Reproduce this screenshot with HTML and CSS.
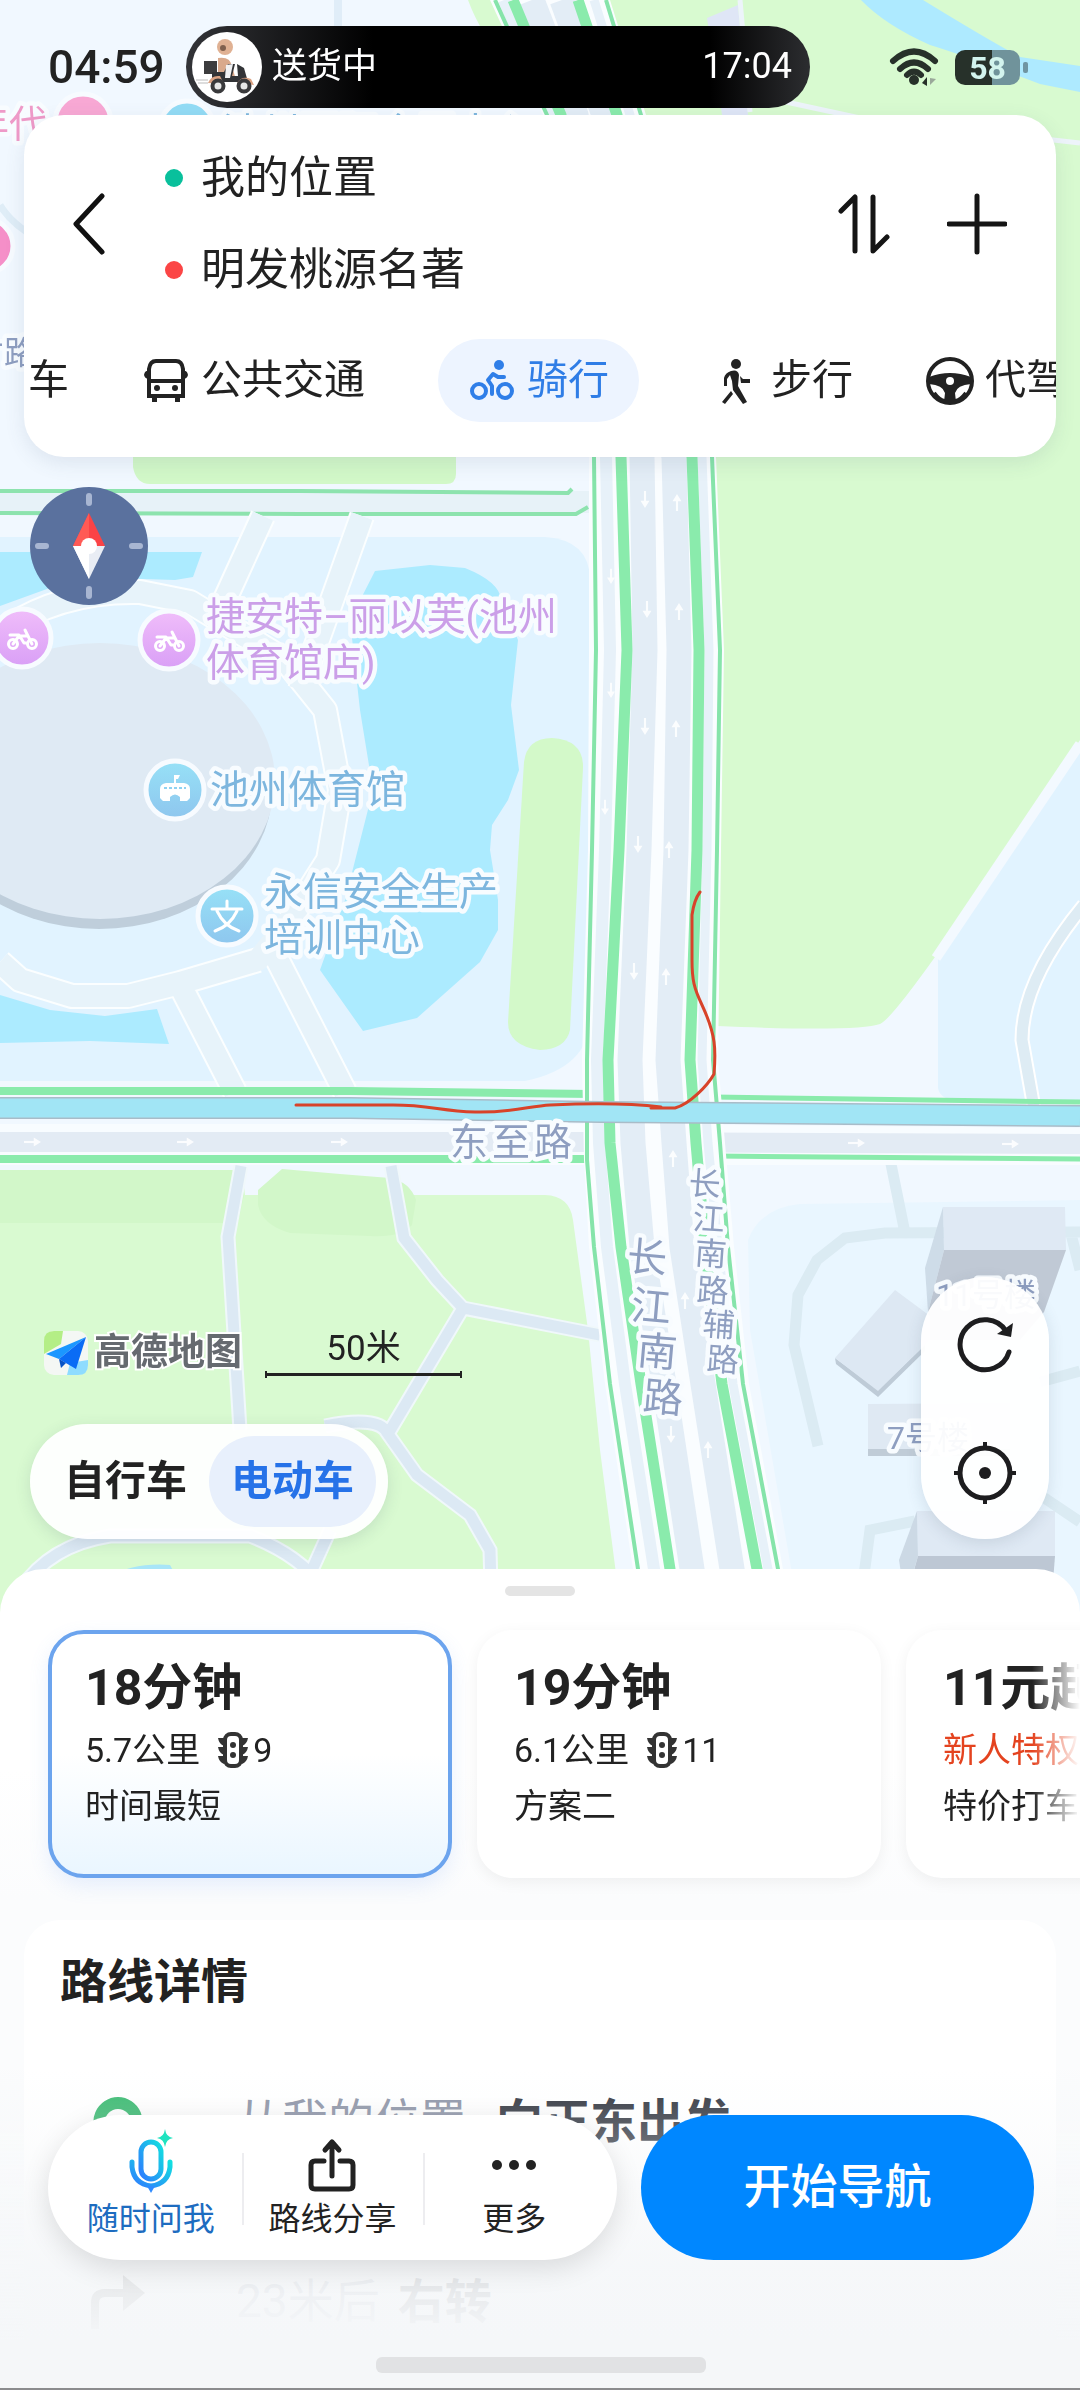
FILE: index.html
```html
<!DOCTYPE html>
<html lang="zh-CN">
<head>
<meta charset="utf-8">
<meta name="viewport" content="width=device-width, initial-scale=1">
<title>骑行路线</title>
<link rel="stylesheet" href="styles.css">
</head>
<body>
<main class="app">
  <section class="stage">
    <svg class="map" viewBox="0 0 1080 1620" preserveAspectRatio="xMidYMin slice" role="img" aria-label="地图">
      <defs>
        <symbol id="lane-arrow" viewBox="0 0 12 20"><path d="M6 0 L11 8 H7.2 V19 H4.8 V8 H1 Z" fill="#fff"/></symbol>
        <linearGradient id="poi-purple" x1="0" y1="0" x2="0" y2="1"><stop offset="0" stop-color="#f0bdfa"/><stop offset="1" stop-color="#d99ff6"/></linearGradient>
        <linearGradient id="poi-blue" x1="0" y1="0" x2="0" y2="1"><stop offset="0" stop-color="#97e1f7"/><stop offset="1" stop-color="#8ec6ee"/></linearGradient>
        <g id="moto" fill="none" stroke="#fff" stroke-width="3" stroke-linecap="round" stroke-linejoin="round"><circle cx="-9" cy="5" r="4.500"/><circle cx="10" cy="5" r="4.500"/><path d="M-9 5 L-3 -3 H6 L10 5 M-12 -4 H-3 L2 4 H4 M3 -9 L6 -3"/></g>
      </defs>

      <!-- ground -->
      <rect width="1080" height="1620" fill="#f1f8ff"/>
      <path d="M338 0V30" stroke="#e0edf8" stroke-width="8"/>
      <path d="M0 205 Q12 225 40 240" stroke="#dfedf7" stroke-width="7" fill="none"/>
      <path d="M468 0 H1080 V740 L935 957 Q890 1020 880 1024 Q858 1032 717 1026 L714 457 L560 115 Q490 60 468 0Z" fill="#d8fad0"/>
      <path d="M707 18 L738 5 L748 115 H722Z" fill="#dfe6f6"/>
      <path d="M740 0 L750 112 M786 102 L860 118 L1080 143" stroke="#edf4fa" stroke-width="5" fill="none"/>
      <path d="M861 0 H923 Q985 38 1020 57 L1080 66 V92 L1040 84 Q960 54 930 45 Q885 25 861 0Z" fill="#aeeaff"/>
      <path d="M133 457H456V474Q456 484 446 484H150Q136 484 133 467Z" fill="#d2f8c8"/>

      <!-- stadium block -->
      <path d="M0 537H545Q590 540 590 580V1020Q588 1068 525 1081H0Z" fill="#e1f3ff"/>
      <path d="M0 502H572Q592 502 592 502" stroke="#e7f2f8" stroke-width="22" fill="none"/>
      <path d="M0 491H300L568 493L572 489M0 513L300 514H576L588 507" stroke="#8de3ae" stroke-width="4" fill="none"/>
      <g fill="#acebff">
        <path d="M0 552H202L193 577L175 580L80 577L0 606Z"/>
        <path d="M375 571L430 565L465 568Q500 582 501 600L518 640L511 705L519 770L508 800L492 825L490 850L498 900V930L480 962L417 1018L363 1031L320 970L345 900L373 790L360 710L350 620Z"/>
        <path d="M0 995L50 1010L105 1016L157 1009L169 1044L90 1041L0 1043Z"/>
      </g>
      <g fill="none" stroke-linejoin="round">
        <path d="M0 632Q60 590 140 592L190 602L285 660L325 710L340 790L328 860L290 920M258 960L180 983L128 996H72L20 980L0 962M263 516L222 606M362 516L300 690M180 985L235 1092M275 955L345 1092" stroke="#fbfeff" stroke-width="26"/>
        <path d="M0 632Q60 590 140 592L190 602L285 660L325 710L340 790L328 860L290 920L258 960L180 983L128 996H72L20 980L0 962M263 516L222 606M362 516L300 690M180 985L235 1092M275 955L345 1092" stroke="#e7f3fa" stroke-width="22"/>
      </g>
      <ellipse cx="99" cy="791" rx="173" ry="138" fill="#bfcedb"/>
      <ellipse cx="100" cy="781" rx="175" ry="138" fill="#dfeaf4"/>
      <path d="M524 762Q527 738 552 738Q584 740 583 768L570 1030Q566 1049 540 1050Q508 1046 508 1022Z" fill="#d3f9c9"/>

      <!-- east side -->
      <path d="M1080 752L938 958V1088Q940 1099 955 1100H1080Z" fill="#e1f3ff"/>
      <path d="M1080 744L936 958" stroke="#f3f9ff" stroke-width="10"/>
      <g fill="none"><path d="M1084 905Q1022 980 1022 1040L1034 1108" stroke="#fff" stroke-width="15"/><path d="M1084 905Q1022 980 1022 1040L1034 1108" stroke="#deecf4" stroke-width="11"/></g>

      <!-- southern park -->
      <path d="M0 1170H232Q244 1175 245 1195H545Q570 1196 573 1220L588 1330L600 1450L622 1620H0Z" fill="#d9fad1"/>
      <path d="M0 1170H232Q240 1172 244 1195L238 1223H0Z M258 1190L282 1169L340 1174L390 1178Q410 1182 416 1200L412 1225Q400 1238 370 1236L290 1233Q262 1225 258 1205Z" fill="#d2f7c9"/>
      <path d="M70 1620Q100 1560 170 1565L200 1620Z" fill="#a8e5f8"/>
      <path d="M241 1166L228 1237L240 1430M391 1166L404 1238L437 1280L463 1308L600 1335M463 1308L388 1434L417 1475L470 1515L490 1550L492 1620M325 1426Q380 1415 388 1434M20 1590Q50 1545 110 1536H250Q300 1555 325 1590M330 1530L312 1570" fill="none" stroke="#f0f8fb" stroke-width="15"/>
      <path d="M241 1166L228 1237L240 1430M391 1166L404 1238L437 1280L463 1308L600 1335M463 1308L388 1434L417 1475L470 1515L490 1550L492 1620M325 1426Q380 1415 388 1434M20 1590Q50 1545 110 1536H250Q300 1555 325 1590M330 1530L312 1570" fill="none" stroke="#dce9f4" stroke-width="11"/>

      <!-- residential block -->
      <path d="M748 1240Q760 1208 800 1204L1080 1200V1620H800L750 1330Z" fill="#e9f6ff"/>
      <path d="M891 1164L905 1233M1080 1232L885 1233L845 1238L817 1260L798 1295L794 1345L818 1446M1070 1230L1080 1270M1040 1382L1080 1371M1040 1495L1080 1522M858 1620L870 1530L915 1521" fill="none" stroke="#dbebf3" stroke-width="11"/>
      <path d="M943 1207H1065L1066 1250H944Z" fill="#dfe9f4"/>
      <path d="M943 1207L944 1250L928 1312L925 1268Z" fill="#cedce8"/>
      <path d="M944 1250H1066L1044 1312L1020 1340H930L928 1312Z" fill="#c0c9d5"/>
      <path d="M835 1358L878 1390V1397L836 1364ZM878 1390L925 1345V1351L878 1397Z" fill="#becbd7"/>
      <path d="M895 1290L930 1316V1340L878 1391L835 1358Z" fill="#dde8f3"/>
      <path d="M868 1404L1010 1403V1456H868Z" fill="#dfe9f3"/><path d="M868 1449H1010V1456H868Z" fill="#c0ccd7"/>
      <path d="M917 1511H1055V1556H918Z" fill="#dfe9f4"/><path d="M917 1511L918 1556L905 1600L899 1560Z" fill="#ccd9e5"/><path d="M918 1556H1055L1050 1620H900Z" fill="#bdc7d4"/>

      <!-- 东至路 -->
      <path d="M0 1124H600L1080 1128V1165H0Z" fill="#f8fcff"/>
      <path d="M0 1142H600L1080 1144" stroke="#e3ebf4" stroke-width="20" fill="none"/>
      <path d="M0 1091H350L592 1094M0 1159H592" stroke="#8aebac" stroke-width="8" fill="none"/>
      <path d="M714 1097L1080 1102M716 1156L1080 1159" stroke="#8aebac" stroke-width="5" fill="none"/>

      <!-- 长江南路 -->
      <path d="M490 0L543 115L589 457V650L588 850L582 1060L584 1160L589 1247L605 1384L633 1569L642 1620H790L783 1569L749 1384L734 1247L725 1143L718 1060L721 850L724 650L716 457L646 115L610 0Z" fill="#fafdff"/>
      <g fill="none">
        <path d="M504 0L553 115L606 457L610 650L605 850L597 1060L599 1143L607 1247L625 1384L654 1569L662 1620" stroke="#e7f1f9" stroke-width="12"/>
        <path d="M594 0L630 115L702 457L709 650L707 850L702 1060L708 1143L718 1247L733 1384L768 1569L776 1620" stroke="#e7f1f9" stroke-width="9"/>
        <path d="M532 0L576 115L642 457L645 650L639 850L630 1060L633 1143L642 1247L664 1384L692 1569L700 1620" stroke="#e3edf6" stroke-width="25"/>
        <path d="M562 0L604 115L674 457L679 650L676 850L668 1060L674 1143L682 1247L703 1384L732 1569L741 1620" stroke="#e3edf6" stroke-width="25"/>
        <path d="M513 0L561 115L621 457L627 650L619 850L608 1060L610 1143L621 1247L641 1384L670 1569L678 1620M578 0L617 115L692 457L699 650L697 850L690 1060L696 1143L705 1247L722 1384L757 1569L766 1620" stroke="#8aebac" stroke-width="11"/>
        <path d="M495 0L547 115L594 457L596 650L592 850L587 1060V1160L594 1247L610 1384L638 1569L646 1620M606 0L641 115L712 457L720 650L717 850L713 1060L720 1143L728 1247L743 1384L778 1569L786 1620" stroke="#86e4aa" stroke-width="4"/>
      </g>
      <g opacity=".85">
        <use href="#lane-arrow" x="671" y="494" width="12" height="18"/><use href="#lane-arrow" x="673" y="603" width="12" height="18"/><use href="#lane-arrow" x="670" y="720" width="12" height="18"/><use href="#lane-arrow" x="663" y="841" width="12" height="18"/><use href="#lane-arrow" x="660" y="968" width="12" height="18"/><use href="#lane-arrow" x="667" y="1150" width="12" height="18"/><use href="#lane-arrow" x="679" y="1292" width="12" height="18"/><use href="#lane-arrow" x="702" y="1441" width="12" height="18"/>
        <g transform="scale(1 -1)"><use href="#lane-arrow" x="639" y="-508" width="12" height="18"/><use href="#lane-arrow" x="641" y="-618" width="12" height="18"/><use href="#lane-arrow" x="639" y="-735" width="12" height="18"/><use href="#lane-arrow" x="632" y="-853" width="12" height="18"/><use href="#lane-arrow" x="628" y="-980" width="12" height="18"/><use href="#lane-arrow" x="665" y="-1443" width="12" height="18"/><use href="#lane-arrow" x="606" y="-584" width="10" height="16"/><use href="#lane-arrow" x="606" y="-698" width="10" height="16"/><use href="#lane-arrow" x="600" y="-815" width="10" height="16"/></g>
        <g transform="rotate(90)"><use href="#lane-arrow" x="1136" y="-41" width="12" height="18"/><use href="#lane-arrow" x="1136" y="-194" width="12" height="18"/><use href="#lane-arrow" x="1136" y="-348" width="12" height="18"/><use href="#lane-arrow" x="1137" y="-865" width="12" height="18"/><use href="#lane-arrow" x="1138" y="-1019" width="12" height="18"/></g>
      </g>

      <!-- selected route and its sketch line -->
      <path d="M0 1108H350L600 1112L1080 1116" stroke="#a9bcc8" stroke-width="22" fill="none"/>
      <path d="M0 1108H350L600 1112L1080 1116" stroke="#a1e5f5" stroke-width="19" fill="none"/>
      <path d="M296 1105H393C430 1105 440 1111 475 1112S530 1106 550 1105S620 1102 661 1107L651 1108H675C690 1104 708 1085 714 1074C716 1050 716 1035 702 1005C694 988 692 980 692 960V915Q694 900 700 892" fill="none" stroke="#d8432a" stroke-width="3" stroke-linecap="round" stroke-linejoin="round"/>

      <!-- road names -->
      <g class="label road">
        <text class="t38" x="450 492 534" y="1155">东至路</text>
        <text class="t40" x="626 630 636 642" y="1270 1319 1364 1410" rotate="5">长江南路</text>
        <text class="t32" x="688 692 694 696 702 706" y="1194 1229 1264 1301 1335 1370" rotate="4">长江南路辅路</text>
        <text class="t32" x="887" y="1449">7号楼</text>
        <text class="t32" x="936" y="1306">11号楼</text>
        <text class="t32" x="-28" y="364">才路</text>
      </g>
      <!-- places -->
      <g class="label purple"><text class="t39" x="206" y="630">捷安特–丽以芙(池州</text><text class="t39" x="206" y="676">体育馆店)</text></g>
      <g class="label blue">
        <text class="t39" x="210" y="803">池州体育馆</text>
        <text class="t39" x="264" y="905">永信安全生产</text><text class="t39" x="264" y="951">培训中心</text>
        <text class="t39" x="222" y="146">池州国际会展中心</text>
      </g>
      <g class="label pink"><text class="t38" x="-29" y="137">年代</text></g>
      <g stroke="#f7fbff" stroke-width="5">
        <circle cx="169" cy="640" r="29" fill="url(#poi-purple)"/><circle cx="22" cy="638" r="29" fill="url(#poi-purple)"/>
        <circle cx="175" cy="790" r="29" fill="url(#poi-blue)"/><circle cx="227" cy="916" r="29" fill="url(#poi-blue)"/>
        <circle cx="187" cy="128" r="27" fill="#93dcf5"/><circle cx="83" cy="122" r="28" fill="#f8a8d4"/><circle cx="-14" cy="246" r="27" fill="#f58fc8"/>
      </g>
      <use href="#moto" x="169" y="641"/><use href="#moto" x="22" y="639"/>
      <g fill="#fff"><path d="M160 798V789Q160 784 166 783H174V775H180L178 779H176V783H184Q190 784 190 789V798L187 801H180V797Q175 792 170 797V801H163Z"/></g>
      <path d="M164 788H186" stroke="#8ed2f2" stroke-width="2" stroke-dasharray="3 2"/>
      <path d="M212 909H242M227 901V909M217 911Q224 926 239 931M237 911Q230 926 215 931" fill="none" stroke="#fff" stroke-width="3" stroke-linecap="round"/>
    </svg>

    <header class="status">
      <time class="clock">04:59</time>
      <div class="island">
        <svg class="avatar" viewBox="0 0 70 70" aria-hidden="true">
          <circle cx="35" cy="35" r="35" fill="#fff"/>
          <path d="M4 48H16M6 51H16" stroke="#ddd" stroke-width="2"/>
          <path d="M26 26Q38 24 40 34L44 48H26Z" fill="#d9a98c"/>
          <circle cx="33" cy="15" r="8" fill="#e0b193"/><circle cx="31" cy="16" r="3" fill="#80604e"/>
          <path d="M12 29H25V42H12Z" fill="#3c3c3e"/>
          <path d="M20 40H32L36 32H43L40 44H46L45 32L52 36L56 50H20Z" fill="#333437"/>
          <path d="M34 33L41 32L38 46H33Z" fill="#f2f2f4"/>
          <path d="M16 51Q19 43 28 44L32 52Z M45 51Q50 43 59 47L62 53Z" fill="#dba282"/>
          <circle cx="26" cy="54" r="5.500" fill="#e8e8e8" stroke="#3a3a3c" stroke-width="4"/><circle cx="52" cy="54" r="5.500" fill="#e8e8e8" stroke="#3a3a3c" stroke-width="4"/>
        </svg>
        <span>送货中</span>
        <time class="eta">17:04</time>
      </div>
      <div class="signals">
        <svg class="wifi" viewBox="0 0 52 38" aria-label="Wi-Fi">
          <g fill="none" stroke="#27312a" stroke-width="6" stroke-linecap="round"><path d="M4 13Q25 -6 46 13"/><path d="M11 21Q25 8 39 21"/><path d="M18 27Q25 20 32 27"/></g>
          <circle cx="25" cy="32" r="5" fill="#27312a"/><path d="M38 29V38L33 35Z" fill="#27312a"/><path d="M41 30L47 31L41 37Z" fill="#9aa89a"/>
        </svg>
        <div class="battery"><span>58</span></div>
      </div>
    </header>

    <section class="planner">
      <div class="trip">
        <button class="icon-btn" aria-label="返回"><svg width="36" height="62" viewBox="0 0 36 62"><path d="M30 3L4 31L30 59" fill="none" stroke="#111" stroke-width="5" stroke-linecap="round" stroke-linejoin="round"/></svg></button>
        <div class="points">
          <button class="point from">我的位置</button>
          <button class="point to">明发桃源名著</button>
        </div>
        <button class="icon-btn" aria-label="交换起终点"><svg width="52" height="62" viewBox="0 0 52 62"><path d="M3 18L17 4V58M35 4V58L49 44" fill="none" stroke="#151515" stroke-width="5" stroke-linecap="round" stroke-linejoin="round"/></svg></button>
        <button class="icon-btn" aria-label="添加途经点"><svg width="60" height="62" viewBox="0 0 60 62"><path d="M30 3V59M2 31H58" stroke="#151515" stroke-width="5" stroke-linecap="round"/></svg></button>
      </div>
      <nav class="modes">
        <button class="mode">车</button>
        <button class="mode"><svg viewBox="0 0 48 48"><g fill="none" stroke="#222" stroke-width="4"><path d="M7 39V12Q8 4 14 4H34Q40 4 41 12V39Z"/><path d="M7 24H41"/></g><path d="M2 18Q3 13 7 14V22Q3 22 2 18ZM46 18Q45 13 41 14V22Q45 22 46 18ZM10 39H15V45H10ZM33 39H38V45H33Z" fill="#222"/><circle cx="15" cy="31" r="3" fill="#222"/><circle cx="33" cy="31" r="3" fill="#222"/></svg>公共交通</button>
        <button class="mode active" aria-current="true"><svg viewBox="0 0 48 48"><circle cx="31" cy="8" r="5" fill="#2f7ee8"/><g fill="none" stroke="#2f7ee8" stroke-width="4"><circle cx="11" cy="34" r="7"/><circle cx="37" cy="34" r="7"/><path d="M24 37V29L20 23L25 17L30 20H36" stroke-linecap="round" stroke-linejoin="round"/></g></svg>骑行</button>
        <button class="mode"><svg viewBox="0 0 48 48"><circle cx="24" cy="7" r="5" fill="#222"/><path d="M19 14Q26 12 27 18L26 29L35 45L31 47L21 33L20 24L18 18L15 22V29H12V21Q13 16 19 14ZM28 19L31 22H38V26H29ZM19 34L21 37L13 47L10 45Z" fill="#222"/></svg>步行</button>
        <button class="mode"><svg viewBox="0 0 48 48"><circle cx="24" cy="24" r="22" fill="none" stroke="#222" stroke-width="4"/><path d="M3 20Q24 12 45 20V27Q31 28 29 36L30 45H18L19 36Q17 28 3 27Z" fill="#222"/><path d="M8 36Q14 44 19 44" stroke="#222" stroke-width="4" fill="none"/><path d="M40 36Q34 44 29 44" stroke="#222" stroke-width="4" fill="none"/><circle cx="24" cy="24" r="4" fill="#fff"/></svg>代驾</button>
      </nav>
    </section>

    <button class="compass" aria-label="指南针">
      <svg viewBox="0 0 118 118"><circle cx="59" cy="59" r="59" fill="#5a719e"/><path d="M59 9V16M59 102V109M8 59H16M102 59H110" stroke="#a8b6d2" stroke-width="6" stroke-linecap="round"/><path d="M59 26L75 59H43Z" fill="#fa4346"/><path d="M59 26L43 59H59Z" fill="#ff5a55"/><path d="M59 92L75 59H43Z" fill="#e9edf4"/><path d="M59 92L43 59H59Z" fill="#fff"/><circle cx="59" cy="59" r="8" fill="#fff"/></svg>
    </button>

    <div class="map-tools">
      <div class="left-tools">
        <div class="legend">
          <div class="brand">
            <svg viewBox="0 0 46 46" aria-hidden="true"><rect x="1" y="1" width="44" height="44" rx="10" fill="#f4f7f4"/><path d="M1 11Q1 1 11 1H20L18 14L1 24Z" fill="#b4ee86"/><path d="M24 45L27 33L45 30V35Q45 45 35 45Z" fill="#8edcff"/><path d="M43 7L3 24L16 29Z" fill="#1b97ff"/><path d="M43 7L16 29L33 39Z" fill="#0a6cf5"/><path d="M16 29L18 38L23 33Z" fill="#0752c4"/></svg>
            <span>高德地图</span>
          </div>
          <div class="scale">50米</div>
        </div>
        <div class="vehicle">
          <button>自行车</button>
          <button class="active" aria-pressed="true">电动车</button>
        </div>
      </div>
      <div class="controls">
        <button aria-label="刷新"><svg viewBox="0 0 64 64"><path d="M56 41A25 25 0 1 1 53 20" fill="none" stroke="#1d1d1f" stroke-width="5" stroke-linecap="round"/><path d="M60 12L58 26L44 23Z" fill="#1d1d1f"/></svg></button>
        <button aria-label="定位"><svg viewBox="0 0 64 64"><circle cx="32" cy="32" r="25" fill="none" stroke="#1d1d1f" stroke-width="5"/><circle cx="32" cy="32" r="6" fill="#1d1d1f"/><path d="M32 1V8M32 56V63M1 32H8M56 32H63" stroke="#1d1d1f" stroke-width="4"/></svg></button>
      </div>
    </div>
  </section>

  <section class="sheet">
    <div class="handle"></div>
    <div class="plans">
      <button class="plan selected">
        <strong>18分钟</strong>
        <span class="meta">5.7公里<svg viewBox="0 0 32 36"><rect x="8" y="2" width="16" height="32" rx="6" fill="none" stroke="#333" stroke-width="4"/><path d="M1 6H7V14Q2 12 1 6ZM1 15H7V23Q2 21 1 15ZM1 24H7V32Q2 30 1 24ZM31 6H25V14Q30 12 31 6ZM31 15H25V23Q30 21 31 15ZM31 24H25V32Q30 30 31 24Z" fill="#333"/><circle cx="16" cy="13" r="3" fill="#333"/><circle cx="16" cy="23" r="3" fill="#333"/></svg>9</span>
        <span>时间最短</span>
      </button>
      <button class="plan">
        <strong>19分钟</strong>
        <span class="meta">6.1公里<svg viewBox="0 0 32 36"><rect x="8" y="2" width="16" height="32" rx="6" fill="none" stroke="#333" stroke-width="4"/><path d="M1 6H7V14Q2 12 1 6ZM1 15H7V23Q2 21 1 15ZM1 24H7V32Q2 30 1 24ZM31 6H25V14Q30 12 31 6ZM31 15H25V23Q30 21 31 15ZM31 24H25V32Q30 30 31 24Z" fill="#333"/><circle cx="16" cy="13" r="3" fill="#333"/><circle cx="16" cy="23" r="3" fill="#333"/></svg>11</span>
        <span>方案二</span>
      </button>
      <button class="plan">
        <strong>11元起</strong>
        <span class="meta promo">新人特权</span>
        <span>特价打车</span>
      </button>
    </div>
    <section class="details">
      <h2>路线详情</h2>
      <ol class="steps">
        <li><svg viewBox="0 0 54 54"><path d="M27 2A25 25 0 0 1 45 44L27 54L9 44A25 25 0 0 1 27 2Z" fill="#37b96f"/><circle cx="27" cy="27" r="13" fill="#fff"/></svg><span>从我的位置</span><b>向正东出发</b></li>
        <li class="turn"><svg viewBox="0 0 54 54"><path d="M4 54V28Q4 18 14 18H34" fill="none" stroke="#555" stroke-width="8"/><path d="M32 0L54 18L32 36Z" fill="#555"/></svg><span>23米后</span><b>右转</b></li>
      </ol>
    </section>
    <div class="dock">
      <div class="dock-row">
        <div class="actions">
          <button class="ask">
            <svg viewBox="0 0 64 64"><defs><linearGradient id="mic" x1="1" y1="0" x2="0" y2="1"><stop offset="0" stop-color="#12dfe0"/><stop offset="1" stop-color="#2f7bff"/></linearGradient></defs><g fill="none" stroke="url(#mic)" stroke-width="5" stroke-linecap="round"><rect x="22" y="13" width="20" height="37" rx="10"/><path d="M13 33V38Q15 55 32 57Q49 55 51 38V33"/></g><path d="M28 57H36L32 64Z" fill="#2f8bff"/><path d="M46 0Q47 8 54 9Q47 10 46 18Q45 10 38 9Q45 8 46 0Z" fill="#1fe3c0"/></svg>
            随时问我
          </button>
          <button><svg viewBox="0 0 64 64"><g fill="none" stroke="#222" stroke-width="5" stroke-linecap="round" stroke-linejoin="round"><path d="M24 32H15Q11 32 11 36V56Q11 60 15 60H49Q53 60 53 56V36Q53 32 49 32H40M32 47V14M25 21L32 13L39 21"/></g></svg>路线分享</button>
          <button><svg viewBox="0 0 64 64"><g fill="#222"><circle cx="15" cy="36" r="5"/><circle cx="32" cy="36" r="5"/><circle cx="49" cy="36" r="5"/></g></svg>更多</button>
        </div>
        <button class="start">开始导航</button>
      </div>
      <div class="home-bar"></div>
    </div>
  </section>
</main>
</body>
</html>
```
FILE: styles.css
```css
* { box-sizing: border-box; }

body {
  margin: 0;
  font-family: Roboto, "Noto Sans CJK SC", sans-serif;
  line-height: 1.2;
  color: #222;
  background: #fff;
}

button {
  margin: 0;
  padding: 0;
  border: 0;
  background: none;
  color: inherit;
  font: inherit;
  text-align: left;
  cursor: pointer;
}

svg { display: block; flex: none; }

.app {
  display: flex;
  flex-direction: column;
  min-height: 100vh;
  overflow: hidden;
}

/* map and everything floating on it */
.stage {
  position: relative;
  flex: 1;
  display: flex;
  flex-direction: column;
}

.stage > * { position: relative; }

.stage > .map {
  position: absolute;
  top: 0;
  left: 0;
  width: 100%;
  height: calc(100% + 48px);
}

.label text {
  font-family: Roboto, "Noto Sans CJK SC", sans-serif;
  paint-order: stroke;
  stroke: #f8fcff;
  stroke-width: 9px;
  stroke-linejoin: round;
}
.t32 { font-size: 32px; }
.t38 { font-size: 38px; }
.t39 { font-size: 39px; }
.t40 { font-size: 40px; }
.road { fill: #8e9ec0; }
.purple { fill: #cb9fe8; }
.blue { fill: #7db6de; }
.pink { fill: #ee9ac8; }

.status {
  display: flex;
  align-items: flex-start;
  height: 115px;
  padding: 26px 60px 0 48px;
}
.clock {
  width: 138px;
  line-height: 82px;
  font-size: 46px;
  font-weight: 500;
}
.island {
  display: flex;
  align-items: center;
  gap: 10px;
  width: 624px;
  height: 82px;
  padding: 0 18px 0 6px;
  border-radius: 41px;
  background: linear-gradient(90deg, #333438, #000 30%, #000 84%, #2c2d30);
  color: #fff;
  font-size: 35px;
}
.avatar { width: 70px; height: 70px; }
.eta { margin-left: auto; font-size: 36px; }
.signals {
  display: flex;
  align-items: center;
  gap: 14px;
  height: 82px;
  margin-left: auto;
}
.wifi { width: 52px; height: 38px; }
.battery {
  position: relative;
  width: 65px;
  height: 35px;
  border-radius: 10px;
  background: linear-gradient(90deg, #27312a 57%, #70939b 57%);
  color: #d3f4ee;
  font-size: 32px;
  font-weight: 700;
  line-height: 36px;
  text-align: center;
}
.battery::after {
  content: "";
  position: absolute;
  top: 12px;
  right: -8px;
  width: 5px;
  height: 11px;
  border-radius: 2px;
  background: #6f95a2;
}

.planner {
  margin: 0 24px;
  padding: 14px 0 35px;
  border-radius: 40px;
  background: #fff;
  box-shadow: 0 6px 20px rgba(70, 90, 120, .12);
  overflow: hidden;
}
.trip {
  display: flex;
  align-items: center;
  padding: 3px 49px 0 48px;
}
.points { flex: 1; padding-left: 57px; }
.point {
  display: flex;
  align-items: center;
  gap: 18px;
  width: 100%;
  height: 92px;
  font-size: 44px;
}
.point::before {
  content: "";
  width: 18px;
  height: 18px;
  border-radius: 50%;
  background: #09c09c;
}
.point.to::before { background: #fb4545; }
.icon-btn + .icon-btn { margin-left: 57px; }

.modes {
  display: flex;
  gap: 73px;
  height: 83px;
  margin-top: 23px;
  padding-left: 4px;
  overflow: hidden;
}
.mode {
  display: flex;
  flex: none;
  align-items: center;
  gap: 11px;
  font-size: 41px;
  white-space: nowrap;
}
.mode svg { width: 48px; height: 48px; }
.mode.active {
  padding: 0 30px;
  border-radius: 42px;
  background: #edf4ff;
  color: #2f7de6;
}

.compass {
  width: 118px;
  margin: 30px 0 0 30px;
}

.map-tools {
  display: flex;
  align-items: flex-end;
  justify-content: space-between;
  margin-top: auto;
  padding: 0 31px 30px 30px;
}
.legend {
  display: flex;
  align-items: center;
  gap: 23px;
  height: 46px;
  margin: 0 0 48px 13px;
}
.brand {
  display: flex;
  align-items: center;
  gap: 5px;
  color: #666a70;
  font-size: 37px;
  font-weight: 700;
  -webkit-text-stroke: 4px #fff;
  paint-order: stroke;
}
.brand svg { width: 46px; height: 46px; }
.scale {
  position: relative;
  width: 197px;
  height: 46px;
  border-bottom: 3px solid #222;
  font-size: 35px;
  line-height: 38px;
  text-align: center;
}
.scale::after {
  content: "";
  position: absolute;
  right: 0;
  bottom: -5px;
  left: 0;
  height: 7px;
  border: solid #222;
  border-width: 0 2px;
}
.vehicle {
  display: flex;
  width: max-content;
  padding: 12px;
  border-radius: 58px;
  background: rgba(255, 255, 255, .94);
  box-shadow: 0 4px 16px rgba(60, 80, 100, .14);
}
.vehicle button {
  height: 91px;
  padding: 0 22px;
  border-radius: 46px;
  font-size: 41px;
  font-weight: 700;
}
.vehicle .active { background: #e8f0fc; color: #2672e8; }
.controls {
  display: flex;
  flex-direction: column;
  justify-content: space-between;
  align-items: center;
  width: 128px;
  height: 262px;
  padding: 34px 0;
  border-radius: 64px;
  background: rgba(255, 255, 255, .95);
  box-shadow: 0 4px 16px rgba(60, 80, 100, .14);
}
.controls svg { width: 64px; height: 64px; }

/* bottom sheet */
.sheet {
  position: relative;
  padding: 17px 0 2px;
  border-radius: 44px 44px 0 0;
  background: linear-gradient(#fff 200px, #fbfcfd 330px);
  overflow: hidden;
}
.handle {
  width: 70px;
  height: 10px;
  margin: 0 auto 34px;
  border-radius: 5px;
  background: #e4e4e4;
}
.plans {
  position: relative;
  display: flex;
  gap: 25px;
  padding-left: 48px;
}
.plans::after {
  content: "";
  position: absolute;
  inset: 0 0 0 auto;
  width: 48px;
  background: linear-gradient(90deg, rgba(255, 255, 255, 0), #fff);
}
.plan {
  display: flex;
  flex: none;
  flex-direction: column;
  width: 404px;
  height: 248px;
  padding: 24px 37px;
  border-radius: 36px;
  background: #fff;
  box-shadow: 0 4px 16px rgba(0, 0, 0, .06);
  font-size: 34px;
  line-height: 56px;
}
.plan strong { font-size: 50px; line-height: 68px; }
.plan.selected {
  padding: 20px 33px;
  border: 4px solid #6ca4ee;
  background: linear-gradient(#fff 50%, #eaf6ff);
  box-shadow: 0 8px 20px rgba(100, 150, 240, .14);
}
.meta { display: flex; align-items: center; gap: 4px; }
.meta svg { width: 32px; height: 36px; margin-left: 13px; }
.promo { color: #e4431f; }

.details {
  margin: 42px 24px 0;
  padding: 38px 36px 0;
  border-radius: 36px;
  background: #fff;
}
.details h2 {
  margin: 0 0 22px;
  font-size: 47px;
  line-height: 48px;
}
.steps { margin: 0; padding: 0; list-style: none; }
.steps li {
  display: flex;
  align-items: center;
  height: 180px;
  padding: 8px 0 0 31px;
  font-size: 46px;
}
.steps svg { width: 54px; height: 54px; }
.steps span { margin-left: 91px; color: #8c93a6; }
.steps b { margin-left: 30px; color: #30343e; font-size: 47px; }
.steps .turn b { margin-left: 18px; }

.dock {
  position: absolute;
  right: 0;
  bottom: 0;
  left: 0;
  padding: 45px 46px 15px 48px;
  border-bottom: 2px solid #8b8c8e;
  background: linear-gradient(rgba(245, 247, 249, 0), rgba(245, 247, 249, .25) 20%, rgba(245, 247, 249, .9) 62%, #f5f7f9 85%);
}
.dock-row {
  display: grid;
  grid-template-columns: 569fr 393fr;
  gap: 24px;
}
.actions {
  display: grid;
  grid-template-columns: repeat(3, 1fr);
  align-items: center;
  height: 145px;
  padding: 0 12px;
  border-radius: 73px;
  background: #fff;
  box-shadow: 0 8px 28px rgba(0, 0, 0, .12);
}
.actions button {
  position: relative;
  display: flex;
  flex-direction: column;
  align-items: center;
  gap: 2px;
  height: 117px;
  font-size: 32px;
  line-height: 48px;
}
.actions svg { width: 64px; height: 64px; }
.actions button + button::before {
  content: "";
  position: absolute;
  top: 24px;
  left: 0;
  width: 2px;
  height: 72px;
  background: #ededf0;
}
.ask { color: #1d6cc0; }
.start {
  border-radius: 73px;
  background: #0087ff;
  color: #fff;
  font-size: 47px;
  font-weight: 500;
  text-align: center;
}
.home-bar {
  width: 330px;
  height: 16px;
  margin: 97px auto 0;
  border-radius: 6px;
  background: #e1e2e4;
}
```
